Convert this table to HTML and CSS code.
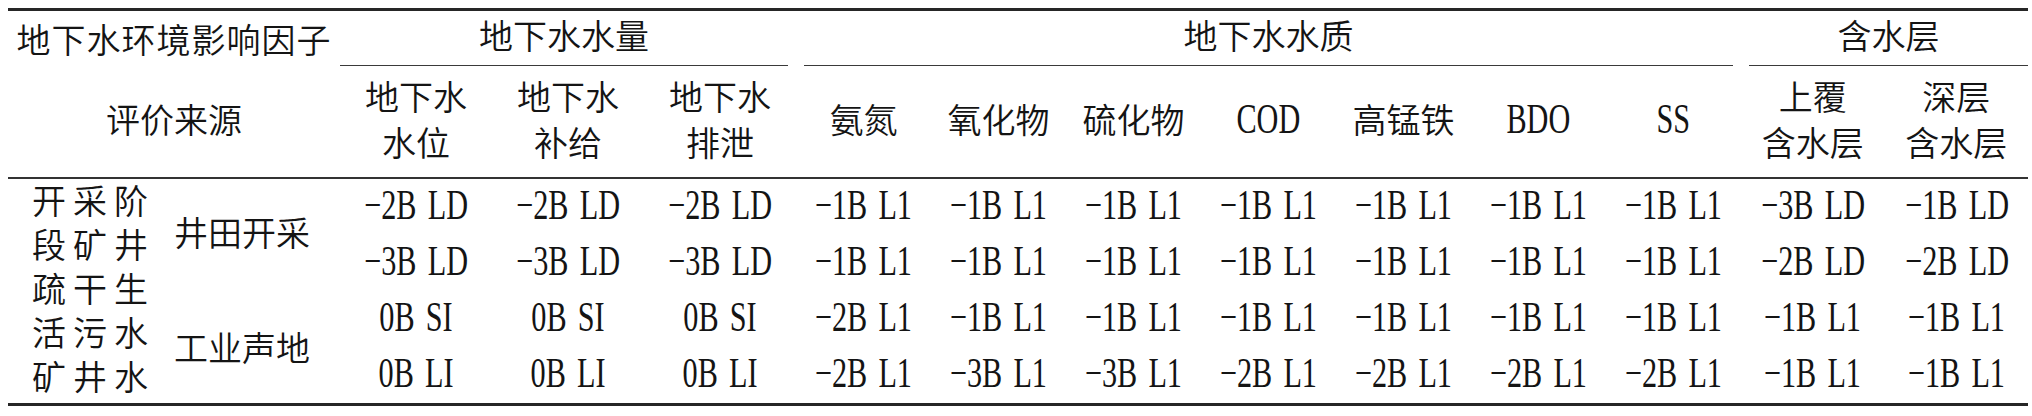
FILE: index.html
```html
<!DOCTYPE html>
<html lang="zh">
<head>
<meta charset="utf-8">
<title>地下水环境影响因子</title>
<link rel="stylesheet" href="styles.css">
</head>
<body>
<table class="tbl">
  <colgroup>
    <col class="w-a"><col class="w-b">
    <col class="w-q"><col class="w-q"><col class="w-q">
    <col class="w-z"><col class="w-z"><col class="w-z"><col class="w-z"><col class="w-z"><col class="w-z"><col class="w-z">
    <col class="w-h"><col class="w-h">
  </colgroup>
  <thead>
    <tr class="r1">
      <th colspan="2" class="factor">地下水环境影响因子</th>
      <th colspan="3" class="grp"><div class="gl gl-first">地下水水量</div></th>
      <th colspan="7" class="grp"><div class="gl gl-mid">地下水水质</div></th>
      <th colspan="2" class="grp"><div class="gl gl-last">含水层</div></th>
    </tr>
    <tr class="r2">
      <th colspan="2">评价来源</th>
      <th>地下水<br>水位</th>
      <th>地下水<br>补给</th>
      <th>地下水<br>排泄</th>
      <th>氨氮</th>
      <th>氧化物</th>
      <th>硫化物</th>
      <th><span class="lat">COD</span></th>
      <th>高锰铁</th>
      <th><span class="lat">BDO</span></th>
      <th><span class="lat">SS</span></th>
      <th>上覆<br>含水层</th>
      <th>深层<br>含水层</th>
    </tr>
  </thead>
  <tbody>
    <tr>
      <td rowspan="4" class="src">开采阶<br>段矿井<br>疏干生<br>活污水<br>矿井水</td>
      <td rowspan="2" class="sub">井田开采</td>
      <td><span class="lat">−2B LD</span></td>
      <td><span class="lat">−2B LD</span></td>
      <td><span class="lat">−2B LD</span></td>
      <td><span class="lat">−1B L1</span></td>
      <td><span class="lat">−1B L1</span></td>
      <td><span class="lat">−1B L1</span></td>
      <td><span class="lat">−1B L1</span></td>
      <td><span class="lat">−1B L1</span></td>
      <td><span class="lat">−1B L1</span></td>
      <td><span class="lat">−1B L1</span></td>
      <td><span class="lat">−3B LD</span></td>
      <td><span class="lat">−1B LD</span></td>
    </tr>
    <tr>
      <td><span class="lat">−3B LD</span></td>
      <td><span class="lat">−3B LD</span></td>
      <td><span class="lat">−3B LD</span></td>
      <td><span class="lat">−1B L1</span></td>
      <td><span class="lat">−1B L1</span></td>
      <td><span class="lat">−1B L1</span></td>
      <td><span class="lat">−1B L1</span></td>
      <td><span class="lat">−1B L1</span></td>
      <td><span class="lat">−1B L1</span></td>
      <td><span class="lat">−1B L1</span></td>
      <td><span class="lat">−2B LD</span></td>
      <td><span class="lat">−2B LD</span></td>
    </tr>
    <tr>
      <td rowspan="2" class="sub sub-low">工业声地</td>
      <td><span class="lat">0B SI</span></td>
      <td><span class="lat">0B SI</span></td>
      <td><span class="lat">0B SI</span></td>
      <td><span class="lat">−2B L1</span></td>
      <td><span class="lat">−1B L1</span></td>
      <td><span class="lat">−1B L1</span></td>
      <td><span class="lat">−1B L1</span></td>
      <td><span class="lat">−1B L1</span></td>
      <td><span class="lat">−1B L1</span></td>
      <td><span class="lat">−1B L1</span></td>
      <td><span class="lat">−1B L1</span></td>
      <td><span class="lat">−1B L1</span></td>
    </tr>
    <tr>
      <td><span class="lat">0B LI</span></td>
      <td><span class="lat">0B LI</span></td>
      <td><span class="lat">0B LI</span></td>
      <td><span class="lat">−2B L1</span></td>
      <td><span class="lat">−3B L1</span></td>
      <td><span class="lat">−3B L1</span></td>
      <td><span class="lat">−2B L1</span></td>
      <td><span class="lat">−2B L1</span></td>
      <td><span class="lat">−2B L1</span></td>
      <td><span class="lat">−2B L1</span></td>
      <td><span class="lat">−1B L1</span></td>
      <td><span class="lat">−1B L1</span></td>
    </tr>
  </tbody>
</table>
</body>
</html>
```

FILE: styles.css
```css
html, body {
  margin: 0;
  background: #ffffff;
}
body {
  padding: 8px;
  font-family: "Liberation Serif", "Noto Sans CJK SC", serif;
  color: #141414;
}
.tbl {
  width: 2020px;
  border-collapse: collapse;
  table-layout: fixed;
  border-top: 3px solid #262626;
  border-bottom: 3px solid #262626;
}
.w-a { width: 152px; }
.w-b { width: 180px; }
.w-q { width: 152px; }
.w-z { width: 135px; }
.w-h { width: 143.5px; }

th, td {
  padding: 0;
  text-align: center;
  vertical-align: middle;
  font-weight: 350;
  font-size: 34px;
  white-space: nowrap;
}
.r1 th {
  height: 55px;
}
.factor {
  letter-spacing: 1px;
}
.grp {
  vertical-align: bottom;
}
.gl {
  height: 54px;
  line-height: 54px;
  border-bottom: 1.5px solid #3a3a3a;
}
.gl-first { margin-right: 8px; }
.gl-mid { margin: 0 8px; }
.gl-last { margin-left: 8px; }

.r2 th {
  height: 111px;
  line-height: 46px;
  border-bottom: 2px solid #333333;
}
tbody td {
  height: 56px;
  line-height: 44px;
}
.src {
  text-align: left;
  line-height: 44px;
  letter-spacing: 7px;
  padding-left: 24px;
}
.sub {
  text-align: left;
  padding-left: 14px;
  letter-spacing: 0;
}
.sub-low {
  padding-top: 6px;
}
.lat {
  display: inline-block;
  font-family: "Liberation Serif", "Times New Roman", "DejaVu Serif", serif;
  font-weight: 400;
  font-size: 42px;
  line-height: 1;
  word-spacing: 5px;
  transform: scaleX(0.72);
}
```
